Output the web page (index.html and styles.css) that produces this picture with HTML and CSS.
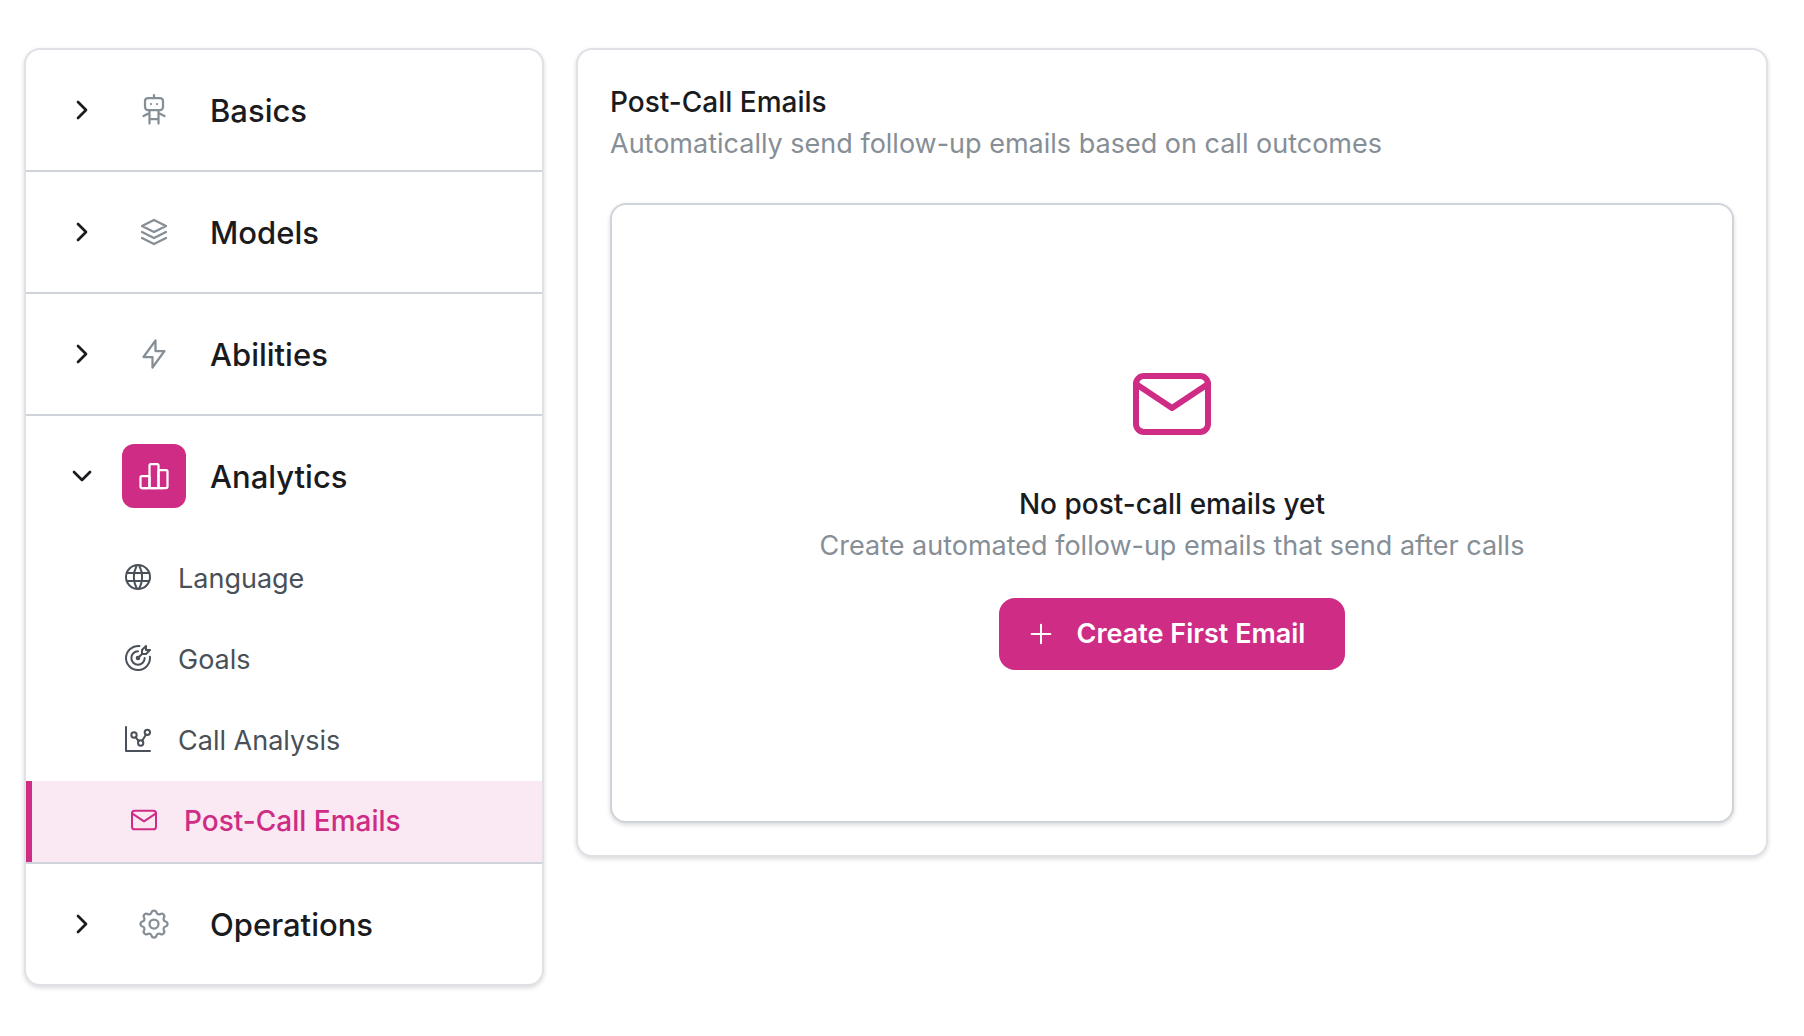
FILE: index.html
```html
<!DOCTYPE html>
<html lang="en">
<head>
<meta charset="utf-8">
<title>Post-Call Emails</title>
<link rel="stylesheet" href="styles.css">
</head>
<body>
<div class="layout">
  <nav class="card sidebar" aria-label="Agent settings">
    <section class="group">
      <button class="group-toggle" type="button" aria-expanded="false">
        <svg class="icon chevron" viewBox="0 0 24 24"><path d="M9 6l6 6l-6 6"/></svg>
        <span class="tile"><svg class="icon icon-lg" viewBox="0 0 24 24"><path d="M8 4h8a2 2 0 0 1 2 2v4a2 2 0 0 1-2 2H8a2 2 0 0 1-2-2V6a2 2 0 0 1 2-2zM12 2v2M9 12v9M15 12v9M5 16l4-2M15 14l4 2M9 18h6M10 8v.01M14 8v.01"/></svg></span>
        <span>Basics</span>
      </button>
    </section>
    <section class="group">
      <button class="group-toggle" type="button" aria-expanded="false">
        <svg class="icon chevron" viewBox="0 0 24 24"><path d="M9 6l6 6l-6 6"/></svg>
        <span class="tile"><svg class="icon icon-lg" viewBox="0 0 24 24"><path d="M12 4L4 8l8 4l8-4zM4 12l8 4l8-4M4 16l8 4l8-4"/></svg></span>
        <span>Models</span>
      </button>
    </section>
    <section class="group">
      <button class="group-toggle" type="button" aria-expanded="false">
        <svg class="icon chevron" viewBox="0 0 24 24"><path d="M9 6l6 6l-6 6"/></svg>
        <span class="tile"><svg class="icon icon-lg" viewBox="0 0 24 24"><path d="M13 3v7h6l-8 11v-7H5z"/></svg></span>
        <span>Abilities</span>
      </button>
    </section>
    <section class="group">
      <button class="group-toggle" type="button" aria-expanded="true">
        <svg class="icon chevron" viewBox="0 0 24 24"><path d="M6 9l6 6l6-6"/></svg>
        <span class="tile tile-active"><svg class="icon icon-lg" viewBox="0 0 24 24"><rect x="3" y="12" width="6" height="8" rx="1"/><rect x="9" y="4" width="6" height="16" rx="1"/><rect x="15" y="8" width="6" height="12" rx="1"/><path d="M4 20h14"/></svg></span>
        <span>Analytics</span>
      </button>
      <div class="links">
        <a class="link" href="#language">
          <svg class="icon" viewBox="0 0 24 24"><path d="M3 12a9 9 0 1 0 18 0a9 9 0 0 0-18 0M3.600 9h16.800M3.600 15h16.800M11.500 3a17 17 0 0 0 0 18M12.500 3a17 17 0 0 1 0 18"/></svg>
          <span>Language</span>
        </a>
        <a class="link" href="#goals">
          <svg class="icon" viewBox="0 0 24 24"><path d="M11 12a1 1 0 1 0 2 0a1 1 0 1 0-2 0M12 7a5 5 0 1 0 5 5M13 3.055A9 9 0 1 0 20.941 11M15 6v3h3l3-3h-3V3zM15 9l-3 3"/></svg>
          <span>Goals</span>
        </a>
        <a class="link" href="#call-analysis">
          <svg class="icon" viewBox="0 0 24 24"><path d="M3 3v18h18"/><circle cx="9" cy="9" r="2"/><circle cx="19" cy="7" r="2"/><circle cx="14" cy="15" r="2"/><path d="M10.160 10.620l2.340 2.880M15.088 13.328l2.837-4.586"/></svg>
          <span>Call Analysis</span>
        </a>
        <a class="link link-active" href="#post-call-emails" aria-current="page">
          <svg class="icon" viewBox="0 0 24 24"><rect x="3" y="5" width="18" height="14" rx="2"/><path d="M3 7l9 6l9-6"/></svg>
          <span>Post-Call Emails</span>
        </a>
      </div>
    </section>
    <section class="group">
      <button class="group-toggle" type="button" aria-expanded="false">
        <svg class="icon chevron" viewBox="0 0 24 24"><path d="M9 6l6 6l-6 6"/></svg>
        <span class="tile"><svg class="icon icon-lg" viewBox="0 0 24 24"><path d="M10.325 4.317c.426-1.756 2.924-1.756 3.350 0a1.724 1.724 0 0 0 2.573 1.066c1.543-.940 3.310 .826 2.370 2.370a1.724 1.724 0 0 0 1.065 2.572c1.756 .426 1.756 2.924 0 3.350a1.724 1.724 0 0 0-1.066 2.573c.940 1.543-.826 3.310-2.370 2.370a1.724 1.724 0 0 0-2.572 1.065c-.426 1.756-2.924 1.756-3.350 0a1.724 1.724 0 0 0-2.573-1.066c-1.543 .940-3.310-.826-2.370-2.370a1.724 1.724 0 0 0-1.065-2.572c-1.756-.426-1.756-2.924 0-3.350a1.724 1.724 0 0 0 1.066-2.573c-.940-1.543 .826-3.310 2.370-2.370c1 .608 2.296 .070 2.572-1.065z"/><circle cx="12" cy="12" r="3"/></svg></span>
        <span>Operations</span>
      </button>
    </section>
  </nav>

  <main class="card panel">
    <header class="panel-header">
      <h1 class="title">Post-Call Emails</h1>
      <p class="description">Automatically send follow-up emails based on call outcomes</p>
    </header>
    <section class="card empty">
      <svg class="icon icon-hero" viewBox="0 0 24 24"><rect x="3" y="5" width="18" height="14" rx="2"/><path d="M3 7l9 6l9-6"/></svg>
      <div class="empty-text">
        <h2 class="title">No post-call emails yet</h2>
        <p class="description">Create automated follow-up emails that send after calls</p>
      </div>
      <button class="primary" type="button">
        <svg class="icon" viewBox="0 0 24 24"><path d="M12 5v14M5 12h14"/></svg>
        <span>Create First Email</span>
      </button>
    </section>
  </main>
</div>
</body>
</html>
```
FILE: styles.css
```css
* {
  box-sizing: border-box;
}

body {
  margin: 0;
  background: #fff;
  color: #1a1b1e;
  font-family: Inter, "Liberation Sans", sans-serif;
  font-size: 27px;
  line-height: 41px;
}

.layout {
  display: grid;
  grid-template-columns: 520px 1fr;
  align-items: start;
  gap: 32px;
  padding: 48px 36px 48px 24px;
}

.card {
  border: 2px solid #e0e1e6;
  border-radius: 16px;
  background: #fff;
  box-shadow: 0 2px 6px rgba(0, 0, 0, 0.05), 0 2px 4px rgba(0, 0, 0, 0.1);
}

.icon {
  flex: none;
  width: 32px;
  height: 32px;
  fill: none;
  stroke: currentColor;
  stroke-width: 1.5;
  stroke-linecap: round;
  stroke-linejoin: round;
}

.icon-lg {
  width: 36px;
  height: 36px;
}

.icon-hero {
  width: 96px;
  height: 96px;
  color: #ce2c85;
}

.chevron {
  stroke-width: 2;
}

/* Sidebar */
.sidebar {
  overflow: hidden;
}

.group + .group {
  border-top: 2px solid #ced4da;
}

.group-toggle {
  display: flex;
  align-items: center;
  gap: 24px;
  width: 100%;
  padding: 28px 40px;
  border: 0;
  background: none;
  color: inherit;
  font: inherit;
  font-size: 31px;
  font-weight: 500;
  text-align: left;
}

.tile {
  display: grid;
  place-items: center;
  width: 64px;
  height: 64px;
  border-radius: 12px;
  color: #868e96;
}

.tile-active {
  background: #ce2c85;
  color: #fff;
}

.links {
  padding-top: 2px;
}

.link {
  display: flex;
  align-items: center;
  gap: 24px;
  padding: 20px 40px 20px 96px;
  color: #495057;
  text-decoration: none;
}

.link .icon {
  margin-bottom: 3px;
}

.link-active {
  border-left: 6px solid #ce2c85;
  background: #fae8f2;
  color: #ce2c85;
  font-size: 28px;
  font-weight: 500;
}

/* Main panel */
.panel {
  padding: 32px;
}

.panel-header {
  margin-bottom: 39px;
}

.title,
.description {
  margin: 0;
}

.title {
  font-size: 28px;
  font-weight: 500;
}

.description {
  color: #868e96;
}

.empty {
  display: flex;
  flex-direction: column;
  align-items: center;
  gap: 32px;
  padding: 151px 32px;
  border-color: #ced4da;
  text-align: center;
}

.primary {
  display: flex;
  align-items: center;
  gap: 20px;
  padding: 16px 40px 16px 26px;
  border: 0;
  border-radius: 16px;
  background: #ce2c85;
  color: #fff;
  font: inherit;
  font-weight: 600;
  line-height: 40px;
}
```
